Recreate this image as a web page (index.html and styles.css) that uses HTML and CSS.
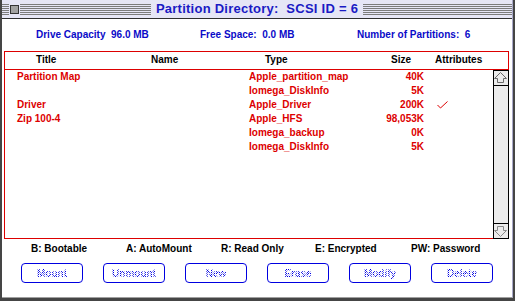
FILE: index.html
```html
<!DOCTYPE html>
<html lang="en">

<head>
    <meta charset="UTF-8">
    <title>Partition Directory</title>
    <link rel="stylesheet" href="styles.css">
</head>

<body>
    <div class="window">
        <div class="titlebar">
            <div class="close-box"><span></span></div>
            <div class="title">Partition Directory:  SCSI ID = 6</div>
        </div>

        <div class="info">
            <span>Drive Capacity  96.0 MB</span>
            <span>Free Space:  0.0 MB</span>
            <span>Number of Partitions:  6</span>
        </div>

        <div class="table">
            <div class="table-head">
                <span>Title</span>
                <span>Name</span>
                <span>Type</span>
                <span>Size</span>
                <span>Attributes</span>
            </div>
            <div class="table-body">
                <div class="rows">
                    <div class="row">
                        <span>Partition Map</span><span></span><span>Apple_partition_map</span><span class="size">40K</span><span></span>
                    </div>
                    <div class="row">
                        <span></span><span></span><span>Iomega_DiskInfo</span><span class="size">5K</span><span></span>
                    </div>
                    <div class="row">
                        <span>Driver</span><span></span><span>Apple_Driver</span><span class="size">200K</span><span class="attr"><svg width="11" height="8" viewBox="0 0 11 8"><polyline points="0.5,4 3.5,7 10.5,0.5" fill="none" stroke="#dd0000" stroke-width="1"/></svg></span>
                    </div>
                    <div class="row">
                        <span>Zip 100-4</span><span></span><span>Apple_HFS</span><span class="size">98,053K</span><span></span>
                    </div>
                    <div class="row">
                        <span></span><span></span><span>Iomega_backup</span><span class="size">0K</span><span></span>
                    </div>
                    <div class="row">
                        <span></span><span></span><span>Iomega_DiskInfo</span><span class="size">5K</span><span></span>
                    </div>
                </div>
                <div class="scrollbar">
                    <div class="arrow up">
                        <svg width="14" height="14" viewBox="0 0 14 14"><path d="M6.5 1.5 L12.5 7.5 L9.5 7.5 L9.5 11.5 L3.5 11.5 L3.5 7.5 L0.5 7.5 Z" fill="none" stroke="#6a6a6a"/></svg>
                    </div>
                    <div class="track"></div>
                    <div class="arrow down">
                        <svg width="14" height="14" viewBox="0 0 14 14"><path d="M6.5 12.5 L12.5 6.5 L9.5 6.5 L9.5 2.5 L3.5 2.5 L3.5 6.5 L0.5 6.5 Z" fill="none" stroke="#8a8a8a"/></svg>
                    </div>
                </div>
            </div>
        </div>

        <div class="legend">
            <span>B: Bootable</span>
            <span>A: AutoMount</span>
            <span>R: Read Only</span>
            <span>E: Encrypted</span>
            <span>PW: Password</span>
        </div>

        <div class="buttons">
            <button class="btn"><span>Mount</span></button>
            <button class="btn"><span>Unmount</span></button>
            <button class="btn"><span>New</span></button>
            <button class="btn"><span>Erase</span></button>
            <button class="btn"><span>Modify</span></button>
            <button class="btn"><span>Delete</span></button>
        </div>
    </div>
</body>

</html>
```

FILE: styles.css
```css
body {
    margin: 0;
    width: 515px;
    height: 301px;
    overflow: hidden;
    background-color: #454545;
    font-family: "Liberation Sans", Arial, sans-serif;
    font-size: 10px;
    font-weight: bold;
}

.window {
    margin-left: 2px;
    width: 510px;
    height: 297px;
    background-color: #fff;
    border-right: 1px solid #a8a8c8;
    border-bottom: 1px solid #a0a0a0;
}

.titlebar {
    display: grid;
    grid-template-columns: 1fr auto 1fr;
    align-items: center;
    height: 18px;
    border-bottom: 1px solid #303030;
    background-color: #e6e6f6;
    background-image: repeating-linear-gradient(to bottom, #7c7c7c 0 1px, #e6e6f6 1px 2px);
    background-size: 100% 11px;
    background-position: 0 4px;
    background-repeat: no-repeat;
}

.close-box {
    grid-column: 1;
    grid-row: 1;
    justify-self: start;
    margin-left: 8px;
    width: 7px;
    height: 7px;
    border: 1px solid #333;
    background-color: #a2a2a2;
    box-shadow: 0 0 0 1px #e6e6f6;
}

.title {
    grid-column: 2;
    grid-row: 1;
    padding: 0 5px;
    background-color: #e6e6f6;
    color: #1a1ac4;
    font-size: 13px;
    letter-spacing: 0.25px;
    white-space: pre;
    line-height: 18px;
}

.info {
    display: grid;
    grid-template-columns: 164px 157px auto;
    margin-top: 10px;
    padding-left: 34px;
    line-height: 12px;
    color: #0a0ac8;
    white-space: pre;
}

.table {
    margin: 10px 3px 0 2px;
    border: 1px solid #dd0000;
}

.table-head {
    display: grid;
    grid-template-columns: 115px 114px 126px 44px auto;
    padding-left: 31px;
    height: 17px;
    line-height: 16px;
    border-bottom: 1px solid #dd0000;
    color: #000;
}

.table-body {
    display: flex;
    height: 168px;
}

.rows {
    flex: 1;
    min-width: 0;
    padding-left: 12px;
    color: #dd0000;
}

.row {
    display: grid;
    grid-template-columns: 232px 0 115px 60px auto;
    height: 14px;
    line-height: 14px;
}

.size {
    text-align: right;
}

.attr {
    padding-left: 13px;
    padding-top: 3px;
    line-height: 0;
}

.scrollbar {
    display: flex;
    flex-direction: column;
    flex-shrink: 0;
    width: 14px;
    margin: 0 -1px -1px 0;
    border: 1px solid #000;
    background-color: #ececec;
}

.arrow {
    height: 14px;
    display: flex;
    align-items: center;
    justify-content: center;
}

.arrow.up {
    border-bottom: 1px solid #000;
}

.arrow.down {
    border-top: 1px solid #000;
}

.track {
    flex: 1;
}

.legend {
    display: grid;
    grid-template-columns: 95px 95px 94px 96px auto;
    margin-top: 3px;
    padding-left: 29px;
    line-height: 14px;
    color: #000;
}

.buttons {
    display: flex;
    gap: 20px;
    margin-top: 7px;
    padding-left: 19px;
}

.btn {
    width: 62px;
    height: 20px;
    padding: 0;
    border: 1px solid #0000e0;
    border-radius: 4px;
    background: #fff;
    font-family: inherit;
    font-size: 10px;
    font-weight: bold;
}

.btn span {
    color: transparent;
    background-image: repeating-conic-gradient(#0000e0 0 25%, transparent 0 50%);
    background-size: 2px 2px;
    -webkit-background-clip: text;
    background-clip: text;
}
```
